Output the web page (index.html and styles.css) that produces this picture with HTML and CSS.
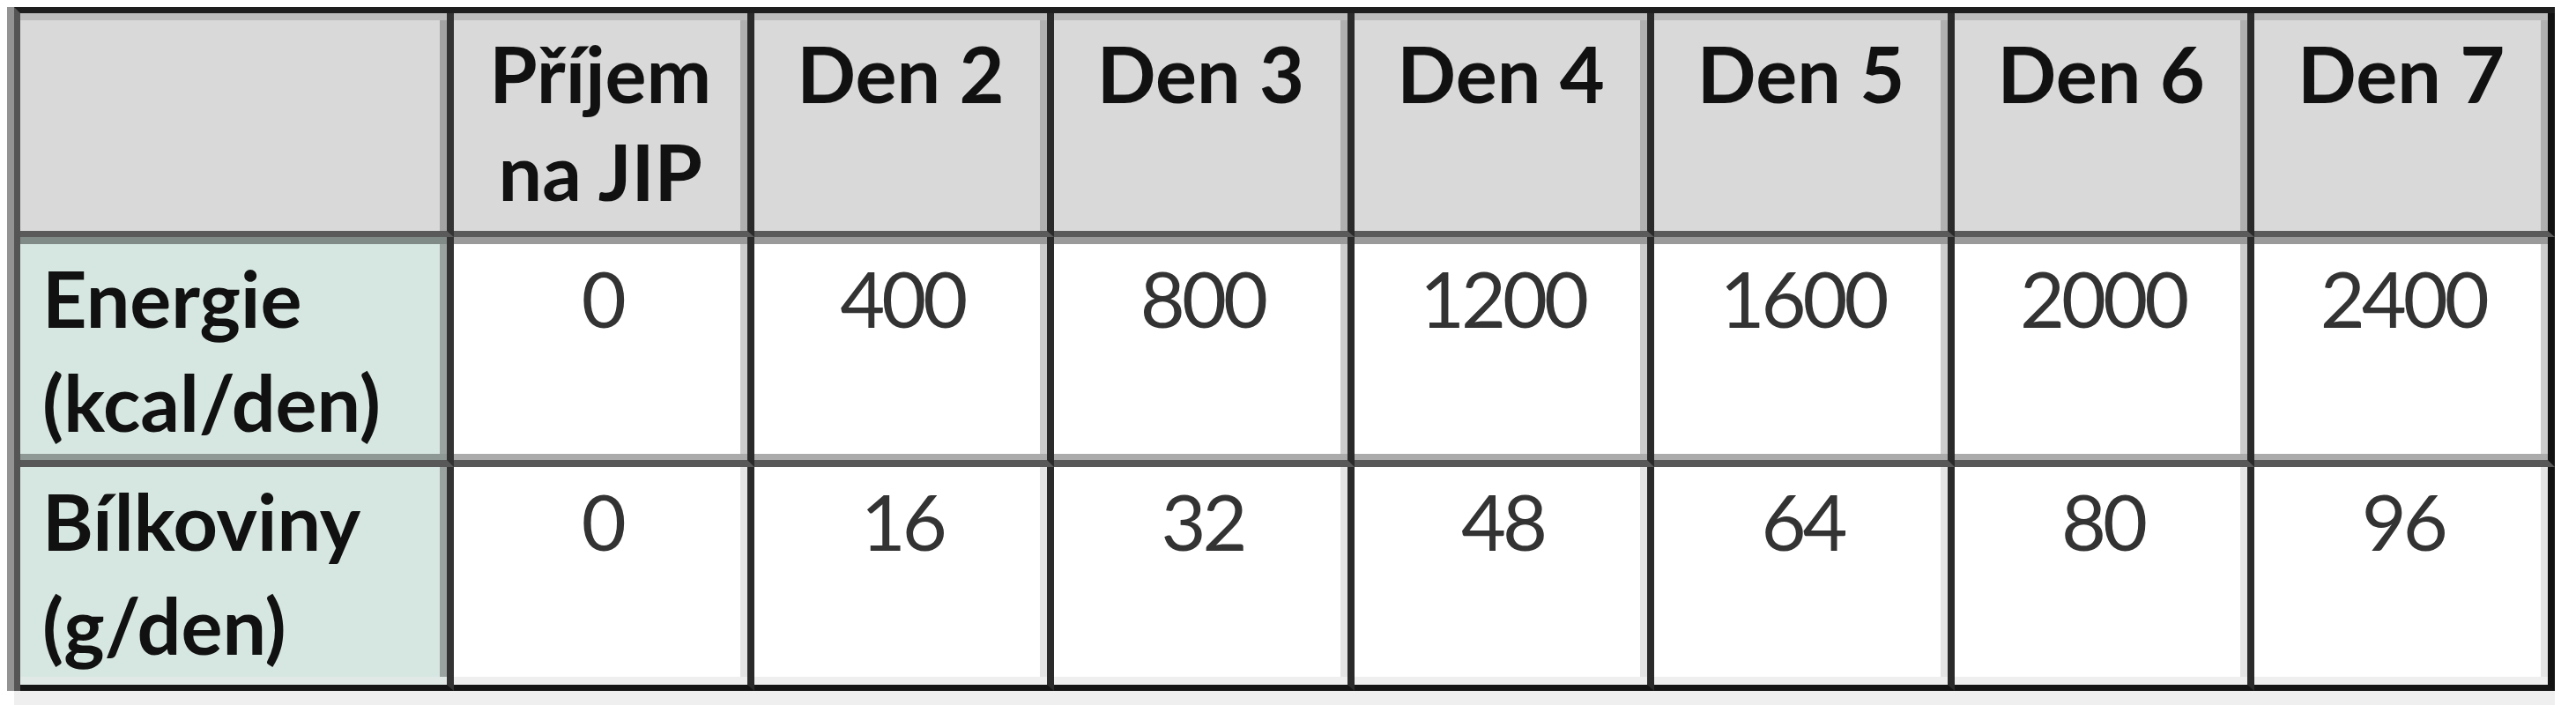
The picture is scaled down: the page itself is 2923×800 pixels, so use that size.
FILE: index.html
```html
<!DOCTYPE html>
<html lang="cs">
<head>
<meta charset="utf-8">
<title>Energie a bílkoviny</title>
<link rel="stylesheet" href="styles.css">
</head>
<body>
<div class="wrap">
  <div class="tbl">
    <div class="cell head corner"></div>
    <div class="cell head">Příjem<br>na JIP</div>
    <div class="cell head">Den 2</div>
    <div class="cell head">Den 3</div>
    <div class="cell head">Den 4</div>
    <div class="cell head">Den 5</div>
    <div class="cell head">Den 6</div>
    <div class="cell head last">Den 7</div>

    <div class="cell row1 stub">Energie<br>(kcal/den)</div>
    <div class="cell row1 num">0</div>
    <div class="cell row1 num">400</div>
    <div class="cell row1 num">800</div>
    <div class="cell row1 num">1200</div>
    <div class="cell row1 num">1600</div>
    <div class="cell row1 num">2000</div>
    <div class="cell row1 num last">2400</div>

    <div class="cell row2 stub">Bílkoviny<br>(g/den)</div>
    <div class="cell row2 num">0</div>
    <div class="cell row2 num">16</div>
    <div class="cell row2 num">32</div>
    <div class="cell row2 num">48</div>
    <div class="cell row2 num">64</div>
    <div class="cell row2 num">80</div>
    <div class="cell row2 num last">96</div>
  </div>
  <div class="under"></div>
</div>
</body>
</html>
```

FILE: styles.css
```css
html, body {
  background: #ffffff;
}
body {
  margin: 8px 8px 0 8px;
  font-family: Lato, "Open Sans", "Liberation Sans", sans-serif;
  color: #111111;
}
.wrap {
  margin-left: 8px;
  width: 2883px;
}
.tbl {
  display: grid;
  grid-template-columns: 492px repeat(7, minmax(0, 1fr));
  border-left: 7px solid #555555;
  border-top: 7px solid #1e1e1e;
  box-shadow: -8px 0 0 #939393;
}
.cell {
  box-sizing: border-box;
  border-right: 8px solid #2a2a2a;
  text-align: center;
  font-size: 88px;
}
.cell.last {
  border-right-color: #121212;
}
.head {
  height: 254px;
  background: #d9d9d9;
  border-bottom: 7px solid #5a5a5a;
  box-shadow: inset 0 8px 0 #bdbdbd, inset -8px 0 0 #b0b0b0;
  font-weight: 700;
  line-height: 111px;
  padding-top: 13px;
}
.head.corner {
  border-right-color: #333333;
  box-shadow: inset 0 8px 0 #bdbdbd, inset -8px 0 0 #a3a3a3;
}
.row1 {
  height: 261px;
  background: #ffffff;
  border-bottom: 8px solid #585858;
  box-shadow: inset 0 8px 0 #9a9a9a, inset 0 -7px 0 #ababab, inset -8px 0 0 #cccccc;
  line-height: 118px;
  padding-top: 10px;
}
.row2 {
  height: 254px;
  background: #ffffff;
  border-bottom: 7px solid #151515;
  box-shadow: inset 0 -9px 0 #efefef, inset -8px 0 0 #e4e4e4;
  line-height: 118px;
  padding-top: 2px;
}
.stub {
  text-align: left;
  padding-left: 25px;
  font-weight: 700;
  background: #d6e7e2;
  border-right-color: #333333;
}
.row1.stub {
  box-shadow: inset 0 8px 0 #808a87, inset 0 -7px 0 #8e9894, inset -8px 0 0 #9aa3a0;
}
.row2.stub {
  box-shadow: inset 0 -9px 0 #e0e9e6, inset -8px 0 0 #9aa3a0;
}
.num {
  font-weight: 400;
  color: #333333;
  letter-spacing: -4px;
  padding-left: 4px;
}
.under {
  height: 16px;
  background: #efefef;
}
```
